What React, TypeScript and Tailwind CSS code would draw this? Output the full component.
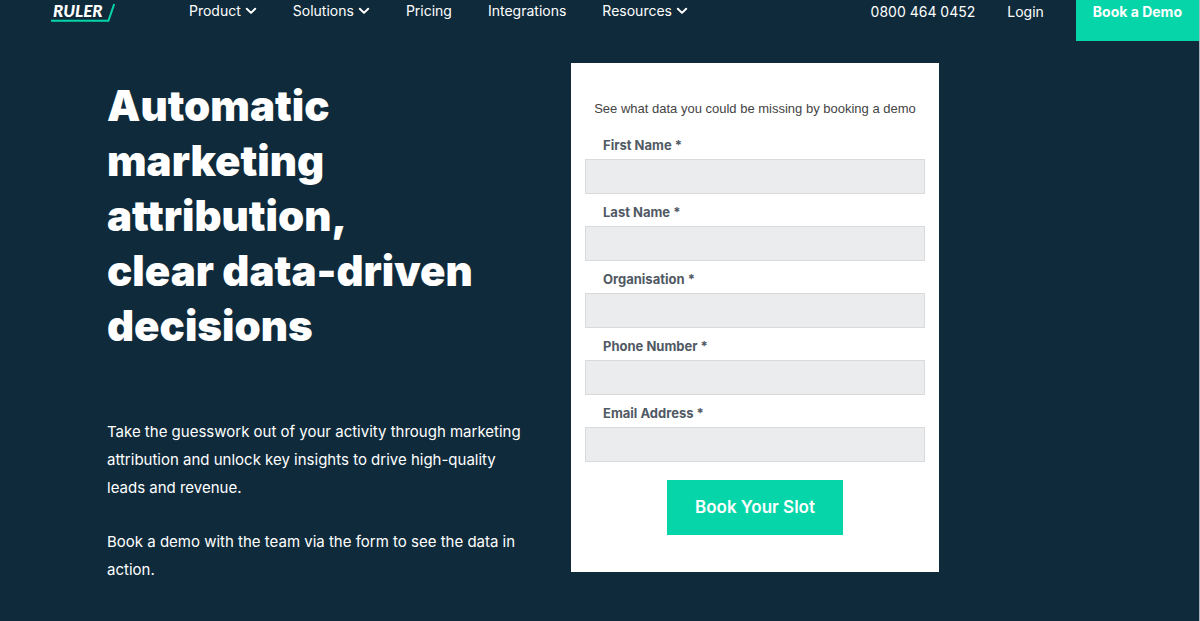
import React from "react";

const navItems = [
  { label: "Product", menu: true },
  { label: "Solutions", menu: true },
  { label: "Pricing", menu: false },
  { label: "Integrations", menu: false },
  { label: "Resources", menu: true },
];

const fields = [
  { id: "first-name", label: "First Name *", type: "text" },
  { id: "last-name", label: "Last Name *", type: "text" },
  { id: "organisation", label: "Organisation *", type: "text" },
  { id: "phone", label: "Phone Number *", type: "tel" },
  { id: "email", label: "Email Address *", type: "email" },
];

function Chevron() {
  return (
    <svg width="12" height="8" viewBox="0 0 12 8" fill="none" aria-hidden="true">
      <path d="M1.8 1.8 6 5.9l4.2-4.1" stroke="currentColor" strokeWidth="2" strokeLinecap="round" strokeLinejoin="round" />
    </svg>
  );
}

function Logo() {
  return (
    <a href="#home" className="relative h-[22px] w-16 shrink-0 pl-[2px] font-['Lato',sans-serif] text-[17px] leading-[21px] font-black italic">
      RULER
      <svg className="absolute inset-0" width="64" height="22" viewBox="0 0 64 22" fill="none" aria-hidden="true">
        <path d="M0 20.8H57.4L63.2 4" stroke="#05d5a8" strokeWidth="2" />
      </svg>
    </a>
  );
}

function Header() {
  return (
    <header className="flex items-start pl-[51px]">
      <Logo />
      <nav className="ml-[74px] flex gap-9 text-[14px] leading-[22px]">
        {navItems.map((item) =>
          item.menu ? (
            <button key={item.label} type="button" className="flex items-center gap-1">
              {item.label}
              <Chevron />
            </button>
          ) : (
            <a key={item.label} href={`#${item.label.toLowerCase()}`}>
              {item.label}
            </a>
          ),
        )}
      </nav>
      <div className="ml-auto flex items-start gap-8 text-[14px] leading-6">
        <a href="tel:08004640452">0800 464 0452</a>
        <a href="#login">Login</a>
        <a href="#demo" className="h-[41px] bg-[#05d5a8] px-[17px] text-[14px] font-bold">
          Book a Demo
        </a>
      </div>
    </header>
  );
}

function DemoForm() {
  return (
    <form className="flex flex-col bg-white px-[14px] pt-[34px] pb-[37px]" onSubmit={(e) => e.preventDefault()}>
      <p className="text-center font-['Liberation_Sans',sans-serif] text-[13px] leading-6 text-[#444444]">
        See what data you could be missing by booking a demo
      </p>
      <div className="mt-[6px]">
        {fields.map((field) => (
          <div key={field.id}>
            <label htmlFor={field.id} className="block h-8 pt-1 pl-[18px] text-[13px] leading-7 font-bold text-[#505964]">
              {field.label}
            </label>
            <input id={field.id} type={field.type} className="block h-[35px] w-full border border-[#d9dadb] bg-[#ebeced] px-3 text-sm text-[#505964]" />
          </div>
        ))}
      </div>
      <button type="submit" className="mt-[18px] h-[55px] w-44 self-center bg-[#05d5a8] text-[17px] font-semibold text-white">
        Book Your Slot
      </button>
    </form>
  );
}

export default function App() {
  return (
    <div className="min-h-screen border-r border-[#aab4ba] bg-[#0f2b3b] font-['Inter',sans-serif] text-white">
      <Header />
      <main className="grid grid-cols-[minmax(0,464px)_minmax(0,368px)] items-start pt-[22px] pl-[107px]">
        <section className="pt-[15px] pr-9">
          <h1 className="text-[42px] leading-[55px] font-black">
            Automatic
            <br />
            marketing
            <br />
            attribution,
            <br />
            clear data-driven
            <br />
            decisions
          </h1>
          <div className="mt-[65px] flex flex-col gap-[26px] text-[15px] leading-7">
            <p>
              Take the guesswork out of your activity through marketing attribution and unlock key insights to drive high-quality leads and revenue.
            </p>
            <p>Book a demo with the team via the form to see the data in action.</p>
          </div>
        </section>
        <DemoForm />
      </main>
    </div>
  );
}
